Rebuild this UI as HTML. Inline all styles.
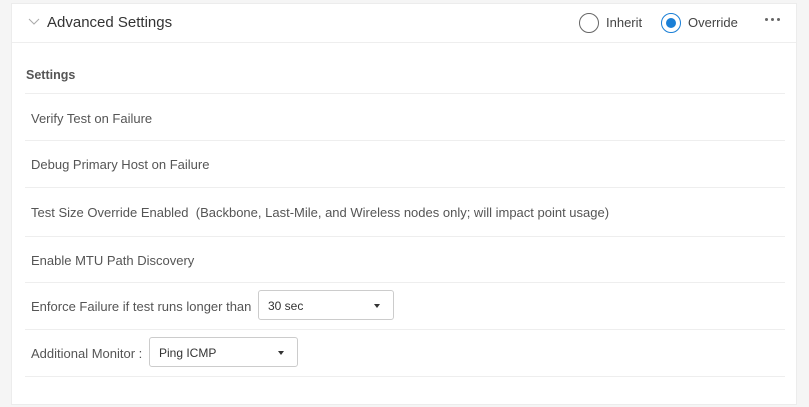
<!DOCTYPE html>
<html><head><style>
body{margin:0;width:809px;height:407px;background:#f5f5f5;font-family:"Liberation Sans",sans-serif;position:relative;overflow:hidden}
.card{position:absolute;left:11px;top:3px;width:786px;height:402px;background:#fff;border:1px solid #ececec;box-sizing:border-box}
.hdr{position:absolute;left:0;top:0;width:100%;height:38px;border-bottom:1px solid #eee}
.t{position:absolute;font-size:13px;color:#555;white-space:nowrap}
.line{position:absolute;left:13px;width:760px;height:1px;background:#eee}
.sel{position:absolute;height:30px;border:1px solid #ccc;border-radius:3px;box-sizing:border-box;font-size:12px;color:#333;padding:8px 0 0 9px}
.caret{position:absolute;right:13px;top:13px;width:0;height:0;border-left:3px solid transparent;border-right:3px solid transparent;border-top:4px solid #333}
.dot{position:absolute;top:14px;width:3px;height:3px;border-radius:50%;background:#666}
</style></head><body>
<div class="card">
<div class="hdr">
<svg style="position:absolute;left:16px;top:14px" width="12" height="8"><path d="M1 1 L6 6 L11 1" stroke="#aaa" fill="none" stroke-width="1"/></svg>
<div class="t" style="left:35px;top:10px;font-size:15px;color:#333">Advanced Settings</div>
<div style="position:absolute;left:567px;top:9px;width:20px;height:20px;border:1px solid #666;border-radius:50%;box-sizing:border-box"></div>
<div class="t" style="left:594px;top:11px;color:#444">Inherit</div>
<div style="position:absolute;left:649px;top:9px;width:20px;height:20px;border:1px solid #1a7fd6;border-radius:50%;box-sizing:border-box"></div>
<div style="position:absolute;left:654px;top:14px;width:10px;height:10px;background:#1a7fd6;border-radius:50%"></div>
<div class="t" style="left:676px;top:11px;color:#444">Override</div>
<div class="dot" style="left:753px"></div><div class="dot" style="left:759px"></div><div class="dot" style="left:765px"></div>
</div>
<div class="t" style="left:14px;top:64px;font-weight:bold;font-size:12.5px">Settings</div>
<div class="line" style="top:89px"></div>
<div class="t" style="left:19px;top:107px">Verify Test on Failure</div>
<div class="line" style="top:136px"></div>
<div class="t" style="left:19px;top:153px">Debug Primary Host on Failure</div>
<div class="line" style="top:183px"></div>
<div class="t" style="left:19px;top:201px">Test Size Override Enabled&nbsp; (Backbone, Last-Mile, and Wireless nodes only; will impact point usage)</div>
<div class="line" style="top:232px"></div>
<div class="t" style="left:19px;top:249px">Enable MTU Path Discovery</div>
<div class="line" style="top:278px"></div>
<div class="t" style="left:19px;top:295px">Enforce Failure if test runs longer than</div>
<div class="sel" style="left:246px;top:286px;width:136px">30 sec<div class="caret"></div></div>
<div class="line" style="top:325px"></div>
<div class="t" style="left:19px;top:342px">Additional Monitor :</div>
<div class="sel" style="left:137px;top:333px;width:149px">Ping ICMP<div class="caret"></div></div>
<div class="line" style="top:372px"></div>
</div>
</body></html>
